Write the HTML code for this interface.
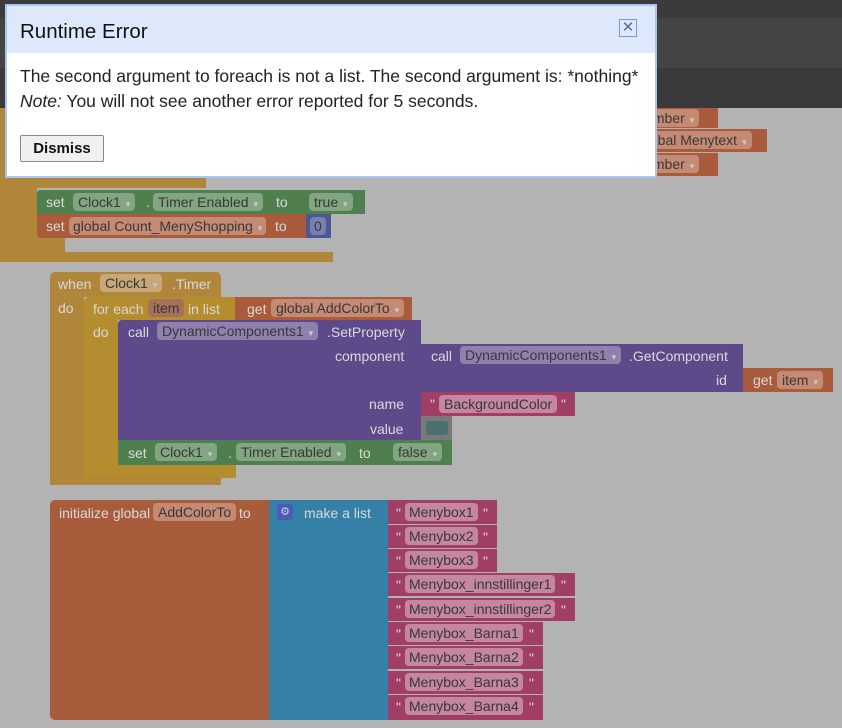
<!DOCTYPE html>
<html><head><meta charset="utf-8"><style>
*{margin:0;padding:0;box-sizing:border-box}
body{width:842px;height:728px;overflow:hidden;background:#b3b3b3;font-family:"Liberation Sans",sans-serif;position:relative}
.a{position:absolute}
.t{position:absolute;color:#d9d9d9;font-size:14px;white-space:nowrap;line-height:16px}
.f{position:absolute;border-radius:4px;color:#383838;font-size:14px;line-height:18px;height:18px;padding:0 5px;white-space:nowrap}
.dd::after{content:"▾";font-size:9px;color:#ccc;margin-left:5px}
.or{background:#b0873a}
.gr{background:#4f7f4f}
.rd{background:#a95c3c}
.pu{background:#5e4a8b}
.pk{background:#a03e66}
.bl{background:#3580a6}
.fg{background:#82a582}
.fr{background:#c48a74}
.fp{background:#8f80ad}
.fk{background:#c486a1}
</style></head><body>
<div class="a" style="left:0;top:0;width:842px;height:18px;background:#3b3b3b"></div>
<div class="a" style="left:0;top:18px;width:842px;height:50px;background:#444"></div>
<div class="a" style="left:0;top:68px;width:842px;height:40px;background:#3a3a3a"></div>

<div class="a or" style="left:0;top:108px;width:37px;height:146px"></div>
<div class="a or" style="left:37px;top:176px;width:169px;height:12px"></div>
<div class="a or" style="left:37px;top:236px;width:28px;height:18px"></div>
<div class="a or" style="left:0;top:252px;width:333px;height:10px"></div>
<div class="a gr" style="left:37px;top:190px;width:328px;height:24px;border-radius:3px 0 0 0"></div>
<div class="t" style="left:46px;top:194px">set</div>
<div class="f fg dd" style="left:73px;top:193px">Clock1</div>
<div class="t" style="left:146px;top:194px">.</div>
<div class="f fg dd" style="left:153px;top:193px">Timer Enabled</div>
<div class="t" style="left:276px;top:194px">to</div>
<div class="f fg dd" style="left:309px;top:193px">true</div>
<div class="a rd" style="left:37px;top:214px;width:270px;height:24px;border-radius:0 0 0 3px"></div>
<div class="t" style="left:46px;top:218px">set</div>
<div class="f fr dd" style="left:69px;top:217px;padding:0 4px">global Count_MenyShopping</div>
<div class="t" style="left:275px;top:218px">to</div>
<div class="a" style="left:306px;top:214px;width:25px;height:24px;background:#4d5796"></div>
<div class="f" style="left:310px;top:217px;background:#7880b0;padding:0 4px">0</div>
<div class="a rd" style="left:650px;top:108px;width:68px;height:20px"></div>
<div class="f fr dd" style="left:630px;top:109px">Number</div>
<div class="a rd" style="left:650px;top:129px;width:117px;height:23px"></div>
<div class="f fr dd" style="left:634px;top:131px">global Menytext</div>
<div class="a rd" style="left:650px;top:153px;width:68px;height:23px"></div>
<div class="f fr dd" style="left:630px;top:155px">Number</div>

<div class="a" style="left:5px;top:4px;width:652px;height:174px;background:#fff;border:2px solid #a9c6ee"></div>
<div class="a" style="left:7px;top:6px;width:648px;height:47px;background:#dde9fb"></div>
<div class="a" style="left:20px;top:20px;font-size:20.5px;color:#111">Runtime Error</div>
<div class="a" style="left:619px;top:19px;width:18px;height:18px;border:1px solid #7a98c8;color:#5070a0;font-size:15px;line-height:15px;text-align:center">✕</div>
<div class="a" style="left:20px;top:66px;font-size:17.5px;color:#222;white-space:nowrap">The second argument to foreach is not a list. The second argument is: *nothing*</div>
<div class="a" style="left:20px;top:91px;font-size:17.5px;color:#222;white-space:nowrap"><i>Note:</i> You will not see another error reported for 5 seconds.</div>
<div class="a" style="left:20px;top:135px;width:84px;height:27px;border:1px solid #888;border-radius:2px;background:#f0f0f0;font-size:15px;font-weight:bold;line-height:25px;text-align:center;color:#111">Dismiss</div>

<div class="a or" style="left:50px;top:272px;width:171px;height:25px;border-radius:5px 5px 0 0"></div>
<div class="a or" style="left:50px;top:297px;width:34px;height:188px;border-radius:0 0 0 5px"></div>
<div class="a or" style="left:50px;top:470px;width:171px;height:15px"></div>
<div class="t" style="left:58px;top:276px">when</div>
<div class="f fr dd" style="left:100px;top:274px;background:#c8a877">Clock1</div>
<div class="t" style="left:172px;top:276px">.Timer</div>
<div class="t" style="left:58px;top:300px">do</div>
<div class="a" style="left:84px;top:297px;width:151px;height:23px;background:#b38d2e;border-radius:5px 0 0 0"></div>
<div class="a" style="left:84px;top:320px;width:34px;height:158px;background:#b38d2e;border-radius:0 0 0 5px"></div>
<div class="a" style="left:84px;top:464px;width:152px;height:14px;background:#b38d2e"></div>
<div class="t" style="left:93px;top:301px">for each</div>
<div class="f fr" style="left:148px;top:299px;background:#a6705a;padding:0 5px">item</div>
<div class="t" style="left:188px;top:301px">in list</div>
<div class="t" style="left:93px;top:324px">do</div>
<div class="a rd" style="left:235px;top:297px;width:177px;height:23px"></div>
<div class="t" style="left:247px;top:301px">get</div>
<div class="f fr dd" style="left:271px;top:299px">global AddColorTo</div>
<div class="a pu" style="left:118px;top:320px;width:303px;height:121px;border-radius:4px 0 0 0"></div>
<div class="t" style="left:128px;top:324px">call</div>
<div class="f fp dd" style="left:157px;top:322px">DynamicComponents1</div>
<div class="t" style="left:327px;top:324px">.SetProperty</div>
<div class="t" style="left:335px;top:348px">component</div>
<div class="t" style="left:369px;top:396px">name</div>
<div class="t" style="left:370px;top:421px">value</div>
<div class="a pu" style="left:421px;top:344px;width:322px;height:48px"></div>
<div class="t" style="left:431px;top:348px">call</div>
<div class="f fp dd" style="left:460px;top:346px">DynamicComponents1</div>
<div class="t" style="left:629px;top:348px">.GetComponent</div>
<div class="t" style="left:716px;top:372px">id</div>
<div class="a rd" style="left:743px;top:368px;width:90px;height:24px"></div>
<div class="t" style="left:753px;top:372px">get</div>
<div class="f fr dd" style="left:777px;top:371px">item</div>
<div class="a pk" style="left:421px;top:392px;width:154px;height:24px"></div>
<div class="t" style="left:430px;top:396px">"</div>
<div class="f fk" style="left:439px;top:395px;padding:0 5px">BackgroundColor</div>
<div class="t" style="left:561px;top:396px">"</div>
<div class="a" style="left:421px;top:416px;width:31px;height:24px;background:#7a7a7a"></div>
<div class="a" style="left:426px;top:421px;width:22px;height:14px;border-radius:3px;background:#4a7070"></div>
<div class="a gr" style="left:118px;top:440px;width:334px;height:25px"></div>
<div class="t" style="left:128px;top:445px">set</div>
<div class="f fg dd" style="left:155px;top:443px">Clock1</div>
<div class="t" style="left:228px;top:445px">.</div>
<div class="f fg dd" style="left:236px;top:443px">Timer Enabled</div>
<div class="t" style="left:359px;top:445px">to</div>
<div class="f fg dd" style="left:393px;top:443px">false</div>

<div class="a rd" style="left:50px;top:500px;width:219px;height:220px;border-radius:5px 0 0 5px"></div>
<div class="t" style="left:59px;top:505px">initialize global</div>
<div class="f fr" style="left:153px;top:503px;padding:0 5px">AddColorTo</div>
<div class="t" style="left:239px;top:505px">to</div>
<div class="a bl" style="left:269px;top:500px;width:119px;height:220px"></div>
<div class="a" style="left:277px;top:504px;width:16px;height:16px;border-radius:3px;background:#4a5cb8;color:#ccd;font-size:11px;line-height:16px;text-align:center">⚙</div>
<div class="t" style="left:304px;top:505px">make a list</div>

<div class="a pk" style="left:388px;top:500px;width:109px;height:24px"></div>
<div class="t" style="left:396px;top:505px">"</div><div class="f fk" style="left:405px;top:503px;padding:0 4px">Menybox1</div><div class="t" style="left:483px;top:505px">"</div>
<div class="a pk" style="left:388px;top:525px;width:109px;height:23px"></div>
<div class="t" style="left:396px;top:529px">"</div><div class="f fk" style="left:405px;top:527px;padding:0 4px">Menybox2</div><div class="t" style="left:483px;top:529px">"</div>
<div class="a pk" style="left:388px;top:549px;width:109px;height:23px"></div>
<div class="t" style="left:396px;top:553px">"</div><div class="f fk" style="left:405px;top:551px;padding:0 4px">Menybox3</div><div class="t" style="left:483px;top:553px">"</div>
<div class="a pk" style="left:388px;top:573px;width:187px;height:23px"></div>
<div class="t" style="left:396px;top:577px">"</div><div class="f fk" style="left:405px;top:575px;padding:0 4px">Menybox_innstillinger1</div><div class="t" style="left:561px;top:577px">"</div>
<div class="a pk" style="left:388px;top:598px;width:187px;height:23px"></div>
<div class="t" style="left:396px;top:602px">"</div><div class="f fk" style="left:405px;top:600px;padding:0 4px">Menybox_innstillinger2</div><div class="t" style="left:561px;top:602px">"</div>
<div class="a pk" style="left:388px;top:622px;width:155px;height:23px"></div>
<div class="t" style="left:396px;top:626px">"</div><div class="f fk" style="left:405px;top:624px;padding:0 4px">Menybox_Barna1</div><div class="t" style="left:529px;top:626px">"</div>
<div class="a pk" style="left:388px;top:646px;width:155px;height:23px"></div>
<div class="t" style="left:396px;top:650px">"</div><div class="f fk" style="left:405px;top:648px;padding:0 4px">Menybox_Barna2</div><div class="t" style="left:529px;top:650px">"</div>
<div class="a pk" style="left:388px;top:671px;width:155px;height:23px"></div>
<div class="t" style="left:396px;top:675px">"</div><div class="f fk" style="left:405px;top:673px;padding:0 4px">Menybox_Barna3</div><div class="t" style="left:529px;top:675px">"</div>
<div class="a pk" style="left:388px;top:695px;width:155px;height:25px"></div>
<div class="t" style="left:396px;top:699px">"</div><div class="f fk" style="left:405px;top:697px;padding:0 4px">Menybox_Barna4</div><div class="t" style="left:529px;top:699px">"</div>
</body></html>
